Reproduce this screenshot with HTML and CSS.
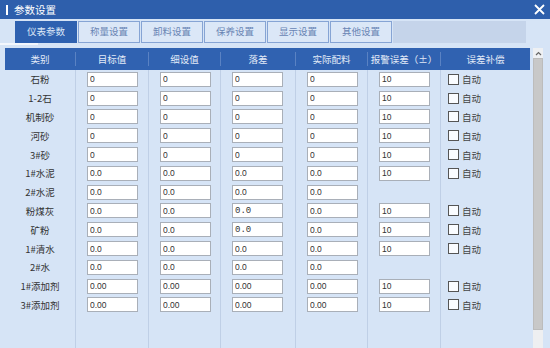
FILE: index.html
```html
<!DOCTYPE html>
<html lang="zh-CN">
<head>
  <meta charset="UTF-8" />
  <title>参数设置</title>
  <link rel="stylesheet" href="styles.css">
</head>
<body>

  <div class="title-bar">
    <span class="mark"></span>
    <h1>参数设置</h1>
    <svg class="close" width="11" height="11" viewBox="0 0 11 11">
      <path d="M1 1 L10 10 M10 1 L1 10" stroke="#fff" stroke-width="1.8" fill="none" />
    </svg>
  </div>

  <div class="tabs">
    <div class="tab active">仪表参数</div>
    <div class="tab">称量设置</div>
    <div class="tab">卸料设置</div>
    <div class="tab">保养设置</div>
    <div class="tab">显示设置</div>
    <div class="tab">其他设置</div>
    <div class="tab-fill"></div>
  </div>
  <div class="tab-line"></div>

  <div class="main">
    <div class="table">
      <div class="row head">
        <div class="cell">类别</div>
        <div class="cell">目标值</div>
        <div class="cell">细设值</div>
        <div class="cell">落差</div>
        <div class="cell">实际配料</div>
        <div class="cell">报警误差（±）</div>
        <div class="cell">误差补偿</div>
      </div>

      <div class="row">
        <div class="cell name">石粉</div>
        <div class="cell"><input class="field" value="0"></div>
        <div class="cell"><input class="field" value="0"></div>
        <div class="cell"><input class="field" value="0"></div>
        <div class="cell"><input class="field" value="0"></div>
        <div class="cell"><input class="field" value="10"></div>
        <div class="cell"><span class="check"><span class="box"></span>自动</span></div>
      </div>
      <div class="row">
        <div class="cell name">1-2石</div>
        <div class="cell"><input class="field" value="0"></div>
        <div class="cell"><input class="field" value="0"></div>
        <div class="cell"><input class="field" value="0"></div>
        <div class="cell"><input class="field" value="0"></div>
        <div class="cell"><input class="field" value="10"></div>
        <div class="cell"><span class="check"><span class="box"></span>自动</span></div>
      </div>
      <div class="row">
        <div class="cell name">机制砂</div>
        <div class="cell"><input class="field" value="0"></div>
        <div class="cell"><input class="field" value="0"></div>
        <div class="cell"><input class="field" value="0"></div>
        <div class="cell"><input class="field" value="0"></div>
        <div class="cell"><input class="field" value="10"></div>
        <div class="cell"><span class="check"><span class="box"></span>自动</span></div>
      </div>
      <div class="row">
        <div class="cell name">河砂</div>
        <div class="cell"><input class="field" value="0"></div>
        <div class="cell"><input class="field" value="0"></div>
        <div class="cell"><input class="field" value="0"></div>
        <div class="cell"><input class="field" value="0"></div>
        <div class="cell"><input class="field" value="10"></div>
        <div class="cell"><span class="check"><span class="box"></span>自动</span></div>
      </div>
      <div class="row">
        <div class="cell name">3#砂</div>
        <div class="cell"><input class="field" value="0"></div>
        <div class="cell"><input class="field" value="0"></div>
        <div class="cell"><input class="field" value="0"></div>
        <div class="cell"><input class="field" value="0"></div>
        <div class="cell"><input class="field" value="10"></div>
        <div class="cell"><span class="check"><span class="box"></span>自动</span></div>
      </div>
      <div class="row">
        <div class="cell name">1#水泥</div>
        <div class="cell"><input class="field" value="0.0"></div>
        <div class="cell"><input class="field" value="0.0"></div>
        <div class="cell"><input class="field" value="0.0"></div>
        <div class="cell"><input class="field" value="0.0"></div>
        <div class="cell"><input class="field" value="10"></div>
        <div class="cell"><span class="check"><span class="box"></span>自动</span></div>
      </div>
      <div class="row">
        <div class="cell name">2#水泥</div>
        <div class="cell"><input class="field" value="0.0"></div>
        <div class="cell"><input class="field" value="0.0"></div>
        <div class="cell"><input class="field" value="0.0"></div>
        <div class="cell"><input class="field" value="0.0"></div>
        <div class="cell"></div>
        <div class="cell"></div>
      </div>
      <div class="row">
        <div class="cell name">粉煤灰</div>
        <div class="cell"><input class="field" value="0.0"></div>
        <div class="cell"><input class="field" value="0.0"></div>
        <div class="cell"><input class="field mono" value="0.0"></div>
        <div class="cell"><input class="field" value="0.0"></div>
        <div class="cell"><input class="field" value="10"></div>
        <div class="cell"><span class="check"><span class="box"></span>自动</span></div>
      </div>
      <div class="row">
        <div class="cell name">矿粉</div>
        <div class="cell"><input class="field" value="0.0"></div>
        <div class="cell"><input class="field" value="0.0"></div>
        <div class="cell"><input class="field mono" value="0.0"></div>
        <div class="cell"><input class="field" value="0.0"></div>
        <div class="cell"><input class="field" value="10"></div>
        <div class="cell"><span class="check"><span class="box"></span>自动</span></div>
      </div>
      <div class="row">
        <div class="cell name">1#清水</div>
        <div class="cell"><input class="field" value="0.0"></div>
        <div class="cell"><input class="field" value="0.0"></div>
        <div class="cell"><input class="field" value="0.0"></div>
        <div class="cell"><input class="field" value="0.0"></div>
        <div class="cell"><input class="field" value="10"></div>
        <div class="cell"><span class="check"><span class="box"></span>自动</span></div>
      </div>
      <div class="row">
        <div class="cell name">2#水</div>
        <div class="cell"><input class="field" value="0.0"></div>
        <div class="cell"><input class="field" value="0.0"></div>
        <div class="cell"><input class="field" value="0.0"></div>
        <div class="cell"><input class="field" value="0.0"></div>
        <div class="cell"></div>
        <div class="cell"></div>
      </div>
      <div class="row">
        <div class="cell name">1#添加剂</div>
        <div class="cell"><input class="field" value="0.00"></div>
        <div class="cell"><input class="field" value="0.00"></div>
        <div class="cell"><input class="field" value="0.00"></div>
        <div class="cell"><input class="field" value="0.00"></div>
        <div class="cell"><input class="field" value="10"></div>
        <div class="cell"><span class="check"><span class="box"></span>自动</span></div>
      </div>
      <div class="row">
        <div class="cell name">3#添加剂</div>
        <div class="cell"><input class="field" value="0.00"></div>
        <div class="cell"><input class="field" value="0.00"></div>
        <div class="cell"><input class="field" value="0.00"></div>
        <div class="cell"><input class="field" value="0.00"></div>
        <div class="cell"><input class="field" value="10"></div>
        <div class="cell"><span class="check"><span class="box"></span>自动</span></div>
      </div>

      <div class="row filler">
        <div class="cell"></div>
        <div class="cell"></div>
        <div class="cell"></div>
        <div class="cell"></div>
        <div class="cell"></div>
        <div class="cell"></div>
        <div class="cell"></div>
      </div>
    </div>

    <div class="scrollbar">
      <div class="arrow">
        <svg width="7" height="5" viewBox="0 0 7 5">
          <path d="M1 4 L3.5 1.5 L6 4" stroke="#666" stroke-width="1.2" fill="none" />
        </svg>
      </div>
      <div class="thumb"></div>
      <div class="track"></div>
    </div>
  </div>

</body>
</html>
```

FILE: styles.css
```css
body {
  margin: 0;
  width: 550px;
  height: 348px;
  overflow: hidden;
  display: flex;
  flex-direction: column;
  background: #d6e4f6;
  font-family: "Noto Sans CJK SC", "Noto Sans", sans-serif;
}

.title-bar {
  height: 19px;
  flex-shrink: 0;
  background: #2e5fac;
  color: #fff;
  display: flex;
  align-items: center;
  padding-left: 6px;
}

.mark {
  width: 2px;
  height: 10px;
  background: #fff;
  margin-right: 6px;
}

.title-bar h1 {
  flex: 1;
  margin: 0;
  font-size: 10.5px;
  font-weight: normal;
  line-height: 19px;
}

.close {
  margin-right: 5px;
}

.tabs {
  display: flex;
  flex-shrink: 0;
  padding: 2px 0 0 15px;
  height: 22px;
}

.tab {
  width: 62px;
  height: 22px;
  margin-right: 1px;
  box-sizing: border-box;
  border: 1.5px solid #86a4d4;
  background: #dbe7f7;
  color: #6884b4;
  font-size: 9.5px;
  line-height: 19px;
  text-align: center;
}

.tab.active {
  background: #2e61b0;
  border-color: #2e61b0;
  color: #dce7f7;
}

.tab-fill {
  width: 133px;
  height: 22px;
  background: #c5d4ea;
}

.tab-line {
  width: 38px;
  height: 2px;
  flex-shrink: 0;
  background: #f3f7fd;
  margin-bottom: 3px;
}

.main {
  flex: 1;
  display: flex;
  min-height: 0;
}

.table {
  width: 525px;
  margin-left: 5px;
  display: flex;
  flex-direction: column;
}

.row {
  display: grid;
  grid-template-columns: 70px 73px 72px 75px 72px 73px 90px;
  height: 18.8px;
}

.cell {
  display: flex;
  align-items: center;
  padding-left: 11px;
  border-left: 1px solid #bfcfe6;
  font-size: 9.5px;
  color: #333;
}

.cell:first-child {
  border-left: none;
  padding-left: 0;
  justify-content: center;
}

.row.head {
  height: 22px;
  background: #3062b1;
}

.row.head .cell {
  margin: 4px 0;
  padding-left: 0;
  justify-content: center;
  border-left-color: #5a82c3;
  color: #e2eaf7;
}

.row.head .cell:first-child {
  border-left: none;
}

.row.filler {
  flex: 1;
}

.field {
  width: 51px;
  height: 15px;
  box-sizing: border-box;
  margin: 0;
  padding: 0 0 0 2px;
  border: 1px solid #a9afb8;
  background: #fff;
  color: #333;
  font-family: "Liberation Sans", sans-serif;
  font-size: 8.5px;
}

.field.mono {
  font-family: "Liberation Mono", monospace;
  font-size: 9px;
}

.check {
  display: flex;
  align-items: center;
  margin-left: -4px;
  font-size: 9.5px;
  color: #444;
}

.box {
  width: 9px;
  height: 9px;
  border: 1px solid #555;
  background: #fafcff;
  margin-right: 3px;
}

.scrollbar {
  width: 10px;
  margin-left: 3px;
  display: flex;
  flex-direction: column;
}

.arrow {
  height: 10px;
  background: #eef0f3;
  display: flex;
  align-items: center;
  justify-content: center;
}

.thumb {
  height: 272px;
  background: #c8c8c8;
  border: 1px solid #bcbcbc;
  box-sizing: border-box;
}

.track {
  flex: 1;
  background: #eeeff1;
}
```
